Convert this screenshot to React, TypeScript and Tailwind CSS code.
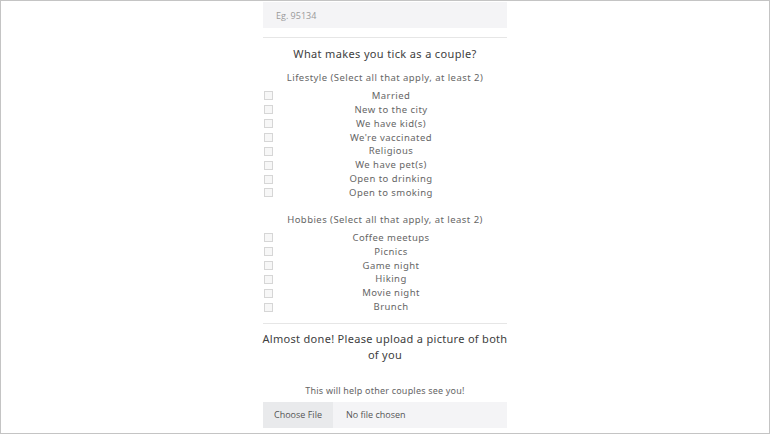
import React from 'react';

const lifestyle = [
  'Married',
  'New to the city',
  'We have kid(s)',
  "We're vaccinated",
  'Religious',
  'We have pet(s)',
  'Open to drinking',
  'Open to smoking',
];

const hobbies = ['Coffee meetups', 'Picnics', 'Game night', 'Hiking', 'Movie night', 'Brunch'];

function CheckRow({ label }: { label: string }) {
  return (
    <div className="flex h-[13.86px] items-center">
      <span className="ml-[1px] h-[9px] w-[9px] border border-[#d6d6d6] bg-[#f7f7f7]" />
      <span className="flex-1 pl-[2px] text-center text-[9.5px] leading-[14px] tracking-[0.45px] text-[#666]">
        {label}
      </span>
    </div>
  );
}

export default function App() {
  return (
    <div
      className="h-[434px] w-[770px] overflow-hidden border border-[#c4c4c4] bg-white"
      style={{ fontFamily: '"Noto Sans", "Lato", sans-serif' }}
    >
      <div className="mx-auto w-[244px] pt-[1px]">
        <input
          placeholder="Eg. 95134"
          className="block h-[26px] w-full bg-[#f4f4f6] px-[13px] text-[9px] text-[#999] outline-none placeholder:text-[#9a9a9a]"
          style={{ fontFamily: '"Open Sans", sans-serif' }}
        />
        <div className="mt-[9px] h-px bg-[#e6e6e6]" />

        <h2 className="mt-[8px] text-center text-[11px] font-normal leading-[16px] tracking-[0.35px] text-[#404040]">
          What makes you tick as a couple?
        </h2>

        <p className="mt-[9px] text-center text-[9.5px] leading-[14px] tracking-[0.45px] text-[#666]">
          Lifestyle (Select all that apply, at least 2)
        </p>
        <div className="mt-[4px]">
          {lifestyle.map((l) => (
            <CheckRow key={l} label={l} />
          ))}
        </div>

        <p className="mt-[13px] text-center text-[9.5px] leading-[14px] tracking-[0.45px] text-[#666]">
          Hobbies (Select all that apply, at least 2)
        </p>
        <div className="mt-[4px]">
          {hobbies.map((h) => (
            <CheckRow key={h} label={h} />
          ))}
        </div>

        <div className="mt-[9px] h-px bg-[#e6e6e6]" />

        <h2 className="-mx-[2px] mt-[7px] text-center text-[11px] font-normal leading-[16px] tracking-[0.3px] text-[#404040]">
          Almost done! Please upload a picture of both of you
        </h2>

        <p className="mt-[21px] text-center text-[9px] leading-[14px] tracking-[0.2px] text-[#666]">
          This will help other couples see you!
        </p>

        <div
          className="mt-[4px] flex h-[26px] items-center bg-[#f4f4f6] text-[9px] text-[#555]"
          style={{ fontFamily: '"Open Sans", sans-serif' }}
        >
          <span className="flex h-full w-[70px] items-center justify-center bg-[#e9eaec]">Choose File</span>
          <span className="pl-[13px]">No file chosen</span>
        </div>
      </div>
    </div>
  );
}
